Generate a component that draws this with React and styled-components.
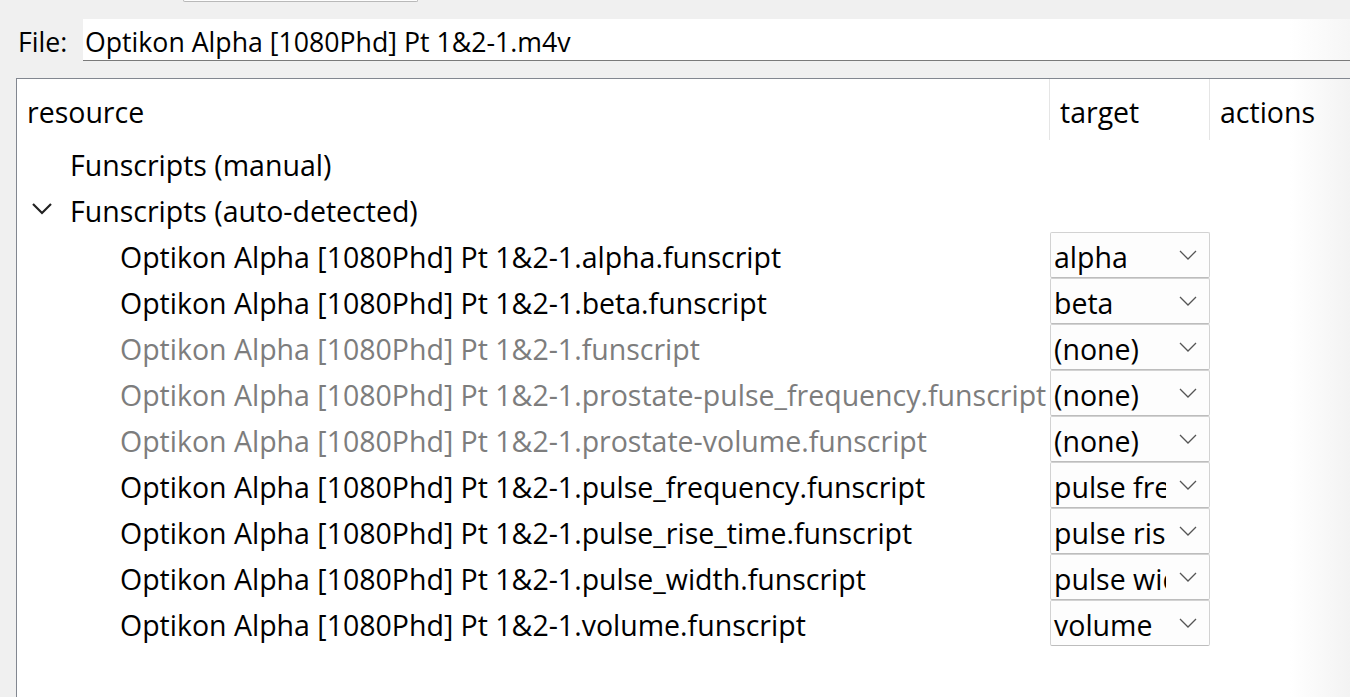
import React from 'react';
import styled, { createGlobalStyle } from 'styled-components';

const GlobalStyle = createGlobalStyle`
    html, body {
        margin: 0;
        padding: 0;
        background: #f0f0f0;
        font-family: "Open Sans", "Noto Sans", sans-serif;
        overflow: hidden;
    }
`;

const COLS = '1033px 160px 1fr';

const Page = styled.div`
    display: flex;
    flex-direction: column;
    height: 100vh;
    font-size: 28.5px;
    color: #000;
`;

const TopStrip = styled.div`
    height: 19px;
    padding-left: 183px;
`;

const TabStub = styled.div`
    width: 233px;
    height: 1px;
    background: #fdfdfd;
    border: 1px solid #b9b9b9;
    border-top: none;
    border-radius: 0 0 2px 2px;
`;

const FileRow = styled.div`
    display: flex;
    align-items: stretch;
    height: 42px;
    padding-left: 18px;
    font-size: 26.7px;
`;

const FileLabel = styled.div`
    width: 65px;
    display: flex;
    align-items: center;
    padding-top: 3px;
`;

const FileInput = styled.div`
    flex: 1;
    display: flex;
    align-items: center;
    padding: 3px 0 0 2px;
    background: linear-gradient(90deg, #fff calc(100% - 60px), #f6f6f6 100%);
    border-bottom: 1px solid #7a7a7a;
`;

const Tree = styled.div`
    flex: 1;
    margin: 17px 0 0 16px;
    border-top: 1px solid #828790;
    border-left: 1px solid #828790;
    background: linear-gradient(90deg, #fff calc(100% - 60px), #f3f3f3 100%);
`;

const Header = styled.div`
    display: grid;
    grid-template-columns: ${COLS};
    height: 61px;
`;

const HeaderCell = styled.div`
    display: flex;
    align-items: center;
    padding: 4px 0 0 10px;
    border-right: ${p => (p.$last ? 'none' : '1px solid #e5e5e5')};
`;

const Row = styled.div`
    display: grid;
    grid-template-columns: ${COLS};
    height: 46px;
`;

const ResourceCell = styled.div`
    display: flex;
    align-items: center;
    padding: 3px 0 0 ${p => p.$indent}px;
    white-space: nowrap;
    overflow: visible;
    color: ${p => (p.$dim ? '#7d7d7d' : '#000')};
`;

const Toggle = styled.svg`
    width: 22px;
    height: 14px;
    margin: -3px 17px 0 -39px;
    flex-shrink: 0;
`;

const TargetCell = styled.div`
    display: flex;
`;

const Combo = styled.div`
    box-sizing: border-box;
    width: 160px;
    height: 46px;
    display: flex;
    align-items: center;
    background: #fdfdfd;
    border: 1px solid #d2d2d2;
    border-bottom-color: #bdbdbd;
    border-radius: 2px;
`;

const ComboText = styled.div`
    width: 112px;
    padding: 3px 0 0 3px;
    overflow: hidden;
    white-space: nowrap;
`;

const ComboArrow = styled.svg`
    width: 18px;
    height: 10px;
    margin-left: 13px;
`;

const files = [
    { name: 'alpha', target: 'alpha' },
    { name: 'beta', target: 'beta' },
    { name: '', target: '(none)', dim: true },
    { name: 'prostate-pulse_frequency', target: '(none)', dim: true },
    { name: 'prostate-volume', target: '(none)', dim: true },
    { name: 'pulse_frequency', target: 'pulse frequency' },
    { name: 'pulse_rise_time', target: 'pulse rise time' },
    { name: 'pulse_width', target: 'pulse width' },
    { name: 'volume', target: 'volume' },
];

const base = 'Optikon Alpha [1080Phd] Pt 1&2-1';

const App = () => {
    return (
        <Page>
            <GlobalStyle />

            <TopStrip>
                <TabStub />
            </TopStrip>

            <FileRow>
                <FileLabel>File:</FileLabel>
                <FileInput>{base}.m4v</FileInput>
            </FileRow>

            <Tree>
                <Header>
                    <HeaderCell>resource</HeaderCell>
                    <HeaderCell>target</HeaderCell>
                    <HeaderCell $last>actions</HeaderCell>
                </Header>

                {/* top level groups */}
                <Row>
                    <ResourceCell $indent={53}>Funscripts (manual)</ResourceCell>
                </Row>
                <Row>
                    <ResourceCell $indent={53}>
                        <Toggle viewBox="0 0 22 14">
                            <polyline points="2,2 11,11 20,2" fill="none" stroke="#222" strokeWidth="2.2" />
                        </Toggle>
                        Funscripts (auto-detected)
                    </ResourceCell>
                </Row>

                {/* detected scripts */}
                {files.map(f => (
                    <Row key={f.name + f.target}>
                        <ResourceCell $indent={103} $dim={f.dim}>
                            {base}{f.name ? '.' + f.name : ''}.funscript
                        </ResourceCell>
                        <TargetCell>
                            <Combo>
                                <ComboText>{f.target}</ComboText>
                                <ComboArrow viewBox="0 0 18 10">
                                    <polyline points="1,1 9,9 17,1" fill="none" stroke="#555" strokeWidth="1.3" />
                                </ComboArrow>
                            </Combo>
                        </TargetCell>
                    </Row>
                ))}
            </Tree>
        </Page>
    );
};

export default App;
